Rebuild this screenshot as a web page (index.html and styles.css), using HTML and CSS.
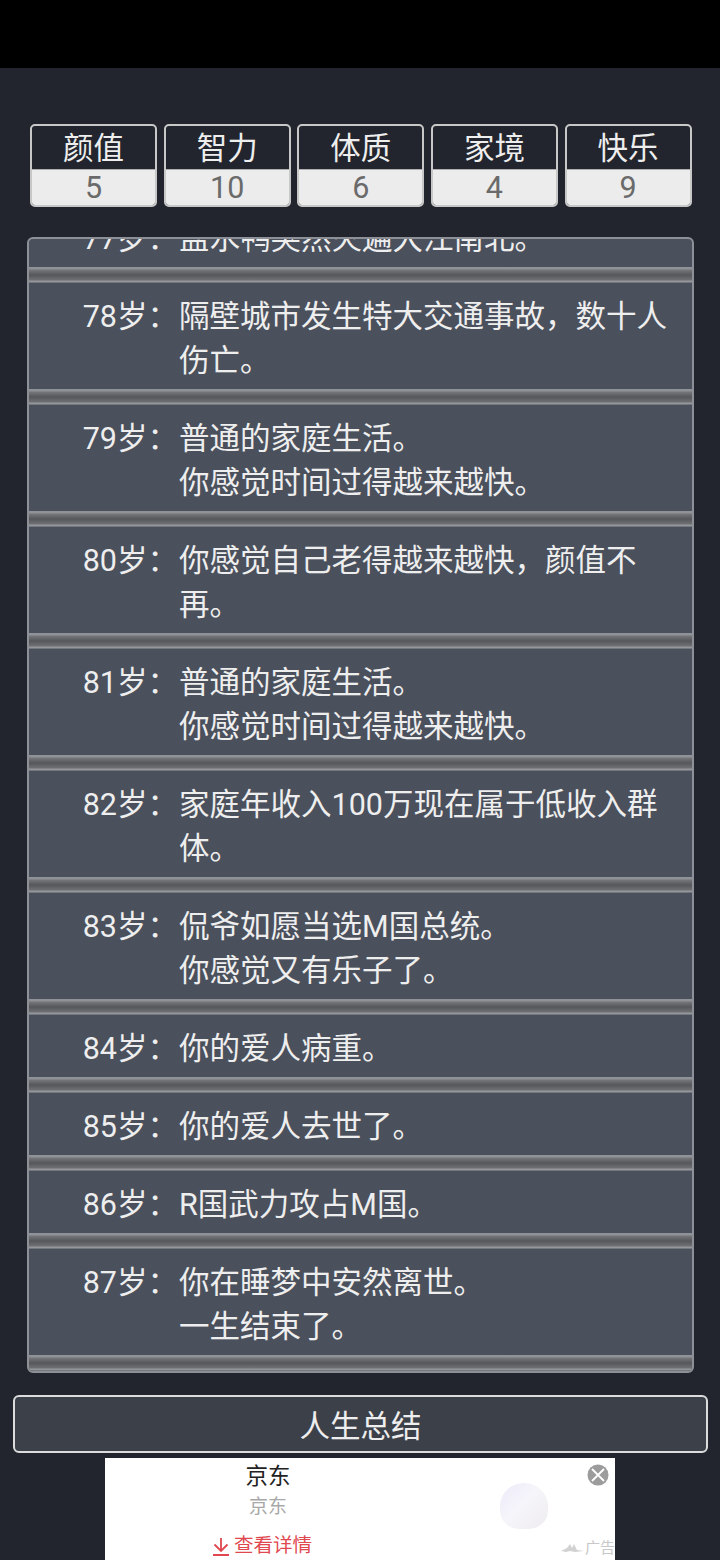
FILE: index.html
```html
<!DOCTYPE html>
<html>
<head>
    <meta charset="UTF-8">
    <title>人生重开模拟器</title>
    <link rel="stylesheet" href="styles.css">
</head>
<body>
    <div class="statusbar"></div>

    <div class="props">
        <div class="prop"><div class="prop-name">颜值</div><div class="prop-val">5</div></div>
        <div class="prop"><div class="prop-name">智力</div><div class="prop-val">10</div></div>
        <div class="prop"><div class="prop-name">体质</div><div class="prop-val">6</div></div>
        <div class="prop"><div class="prop-name">家境</div><div class="prop-val">4</div></div>
        <div class="prop"><div class="prop-name">快乐</div><div class="prop-val">9</div></div>
    </div>

    <ul class="lifelist">
        <li><span class="age">77岁：</span><span class="event">盐水鸭突然火遍大江南北。</span></li>
        <li><span class="age">78岁：</span><span class="event">隔壁城市发生特大交通事故，数十人伤亡。</span></li>
        <li><span class="age">79岁：</span><span class="event">普通的家庭生活。<br>你感觉时间过得越来越快。</span></li>
        <li><span class="age">80岁：</span><span class="event">你感觉自己老得越来越快，颜值不再。</span></li>
        <li><span class="age">81岁：</span><span class="event">普通的家庭生活。<br>你感觉时间过得越来越快。</span></li>
        <li><span class="age">82岁：</span><span class="event">家庭年收入100万现在属于低收入群体。</span></li>
        <li><span class="age">83岁：</span><span class="event">侃爷如愿当选M国总统。<br>你感觉又有乐子了。</span></li>
        <li><span class="age">84岁：</span><span class="event">你的爱人病重。</span></li>
        <li><span class="age">85岁：</span><span class="event">你的爱人去世了。</span></li>
        <li><span class="age">86岁：</span><span class="event">R国武力攻占M国。</span></li>
        <li><span class="age">87岁：</span><span class="event">你在睡梦中安然离世。<br>一生结束了。</span></li>
    </ul>

    <button class="summary">人生总结</button>

    <div class="ad">
        <div class="ad-text">
            <div class="ad-title">京东</div>
            <div class="ad-sub">京东</div>
            <div class="ad-link">
                <svg width="18" height="19" viewBox="0 0 18 19" fill="none" stroke="#e0474f" stroke-width="1.8">
                    <path d="M9 1V14M2.5 7.5L9 14L15.5 7.5M1 18H17"/>
                </svg>
                查看详情
            </div>
        </div>
        <div class="ad-ball"></div>
        <svg class="ad-close" width="22" height="22" viewBox="0 0 22 22">
            <circle cx="11" cy="11" r="10.5" fill="#9c9c9c"/>
            <path d="M5 5L17 17M17 5L5 17" stroke="#fff" stroke-width="1.8"/>
        </svg>
        <div class="ad-mark">
            <svg width="23" height="10" viewBox="0 0 23 10"><path d="M0 8L6 5L9 1L11 5L13 1L16 7L23 8L14 9L9 8L5 9Z" fill="#d2d2d2"/></svg>
            广告
        </div>
    </div>
</body>
</html>
```

FILE: styles.css
```css
html,body,ul,li{ margin: 0; padding: 0; }
body{ width: 720px; height: 1560px; overflow: hidden; display: flex; flex-direction: column; background: #22252d; color: #eee; font-family: Roboto, "Noto Sans CJK SC", sans-serif; }

.statusbar{ height: 68px; background: #000; flex: none; }

/* 属性 */
.props{ display: flex; gap: 6.6px; margin: 56px 28.5px 0 30px; flex: none; }
.prop{ flex: 1; height: 83px; box-sizing: border-box; border: 2px solid #c8c8c8; border-radius: 5px; overflow: hidden; text-align: center; }
.prop-name{ height: 44px; line-height: 46px; font-size: 30.5px; border-bottom: 1px solid #b0b0b0; box-sizing: border-box; color: #eee; }
.prop-val{ height: 37px; line-height: 35px; font-size: 30.5px; background: #ececec; color: #6a6a6a; }

/* 经历列表，底部对齐，顶部被裁切 */
.lifelist{ list-style: none; margin: 30px 26px 0 27px; height: 1136px; flex: none; box-sizing: border-box; border: 2px solid #8d9197; border-radius: 6px; overflow: hidden; display: flex; flex-direction: column; justify-content: flex-end; background: #4a505c; font-size: 30.5px; line-height: 44px; }
.lifelist li{ flex: none; display: flex; padding: 12px 12px 22px 0; position: relative; }
.lifelist li::after{ content: ""; position: absolute; left: 0; right: 0; bottom: 0; height: 16px; background: linear-gradient(#8f9296 0, #8f9296 2px, #747679 3px, #56575a 8px, #6e7073 13px, #95979a 14px, #95979a 15px, #4f5561 16px); }
.age{ width: 150px; margin-left: -1px; margin-right: 1px; flex: none; text-align: right; white-space: nowrap; }
.event{ flex: 1; }

.summary{ display: block; margin: 22px 12px 0 13px; height: 58px; flex: none; box-sizing: border-box; border: 2px solid #dcdcdc; border-radius: 6px; background: #3c4049; color: #eee; font-family: inherit; font-size: 30.5px; padding: 0; }

/* 广告 */
.ad{ margin: 5px 105px 0 105px; height: 102px; flex: none; background: #fff; position: relative; display: flex; overflow: hidden; }
.ad-text{ width: 326px; text-align: center; flex: none; }
.ad-title{ font-size: 22.5px; line-height: 26px; margin-top: 5px; color: #222; }
.ad-sub{ font-size: 19px; line-height: 24px; margin-top: 6px; color: #a8a8a8; }
.ad-link{ display: flex; align-items: center; justify-content: center; gap: 4px; font-size: 19.5px; line-height: 26px; margin-top: 14px; margin-right: 12px; color: #e0474f; }
.ad-ball{ width: 48px; height: 46px; margin: 25px 0 0 69px; border-radius: 50% 50% 40% 40%; background: linear-gradient(135deg, #ebebfa 0, #f6f5fa 45%, #eeecf0 100%); flex: none; }
.ad-close{ position: absolute; top: 6px; right: 6px; }
.ad-mark{ position: absolute; right: 0; bottom: 2px; display: flex; align-items: center; gap: 1px; font-size: 15px; line-height: 20px; color: #c8c8c8; white-space: nowrap; }
```
